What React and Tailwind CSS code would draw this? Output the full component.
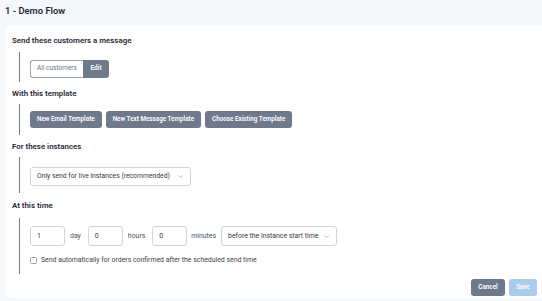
import React from 'react';

const FONT = { fontFamily: 'Roboto, "Noto Sans", "Liberation Sans", sans-serif' };

function Chevron() {
  return (
    <svg width="7" height="7" viewBox="0 0 10 10" className="text-gray-400 shrink-0">
      <path d="M2 3.5 L5 6.5 L8 3.5" fill="none" stroke="currentColor" strokeWidth="1" />
    </svg>
  );
}

function Section({ title, children, className }) {
  return (
    <div>
      <h2 className="text-[7.9px] leading-[12px] font-semibold text-[#1f2733]">{title}</h2>
      <div className={`ml-[7px] border-l-[1.5px] border-[#737b8c] pl-[10px] ${className}`}>
        {children}
      </div>
    </div>
  );
}

function SlateButton({ children }) {
  return (
    <button className="h-[17px] px-[7px] rounded-[3px] bg-[#6e798c] text-white text-[6.3px] font-semibold leading-none whitespace-nowrap">
      {children}
    </button>
  );
}

function NumberBox({ value }) {
  return (
    <div className="w-[35px] h-[20px] border border-[#cfd5dd] rounded-[3px] flex items-center pl-[6px] text-[7px] text-[#333a45]">
      {value}
    </div>
  );
}

export default function App() {
  return (
    <div className="w-[542px] h-[301px] bg-[#f4f8fb] overflow-hidden" style={FONT}>
      <div className="h-[25px] pl-[5px] flex items-center">
        <h1 className="text-[9.4px] font-semibold text-[#1f2733] -mt-[3px]">1 - Demo Flow</h1>
      </div>

      <div className="ml-[5px] h-[273px] bg-white rounded-l-[6px] pl-[7px] pr-[5px] pt-[10px] flex flex-col">
        <Section title="Send these customers a message" className="mt-[5px] pt-[8px] pb-[4px]">
          <div className="flex h-[18px] text-[6.5px]">
            <div className="w-[53px] border border-[#9aa3b1] border-r-0 rounded-l-[3px] flex items-center justify-center text-[#6b7280] whitespace-nowrap">
              All customers
            </div>
            <div className="w-[26px] bg-[#6e798c] rounded-r-[3px] flex items-center justify-center text-white font-semibold">
              Edit
            </div>
          </div>
        </Section>

        <div className="mt-[6px]">
          <Section title="With this template" className="mt-[4px] pt-[7px] pb-[7px]">
            <div className="flex gap-[4px]">
              <SlateButton>New Email Template</SlateButton>
              <SlateButton>New Text Message Template</SlateButton>
              <SlateButton>Choose Existing Template</SlateButton>
            </div>
          </Section>
        </div>

        <div className="mt-[6px]">
          <Section title="For these instances" className="mt-[4px] pt-[10px] pb-[7px]">
            <div className="w-[161px] h-[19px] border border-[#cfd5dd] rounded-[3px] flex items-center justify-between pl-[6px] pr-[6px] text-[6.8px] text-[#333a45] whitespace-nowrap">
              <span>Only send for live instances (recommended)</span>
              <Chevron />
            </div>
          </Section>
        </div>

        <div className="mt-[7px]">
          <Section title="At this time" className="mt-[6px] pt-[8px] pb-[9px]">
            <div className="flex items-center text-[6.9px] text-[#4b5361] whitespace-nowrap">
              <NumberBox value="1" />
              <span className="ml-[5px] mr-[7px]">day</span>
              <NumberBox value="0" />
              <span className="ml-[5px] mr-[7px]">hours</span>
              <NumberBox value="0" />
              <span className="ml-[4px] mr-[5px]">minutes</span>
              <div className="w-[116px] h-[20px] border border-[#cfd5dd] rounded-[3px] flex items-center justify-between pl-[6px] pr-[6px] text-[#333a45]">
                <span>before the instance start time</span>
                <Chevron />
              </div>
            </div>
            <label className="mt-[9px] flex items-center gap-[4px] text-[6.9px] text-[#3d4450] whitespace-nowrap">
              <span className="w-[7px] h-[7px] border border-[#9aa3b1] rounded-[1.5px] bg-white" />
              Send automatically for orders confirmed after the scheduled send time
            </label>
          </Section>
        </div>

        <div className="mt-[5px] flex justify-end gap-[4px]">
          <button className="w-[34px] h-[17px] rounded-[3px] bg-[#6e798c] text-white text-[6.3px] font-semibold">
            Cancel
          </button>
          <button className="w-[28px] h-[17px] rounded-[3px] bg-[#a9cbec] text-white text-[6.3px] font-semibold">
            Save
          </button>
        </div>
      </div>
    </div>
  );
}
